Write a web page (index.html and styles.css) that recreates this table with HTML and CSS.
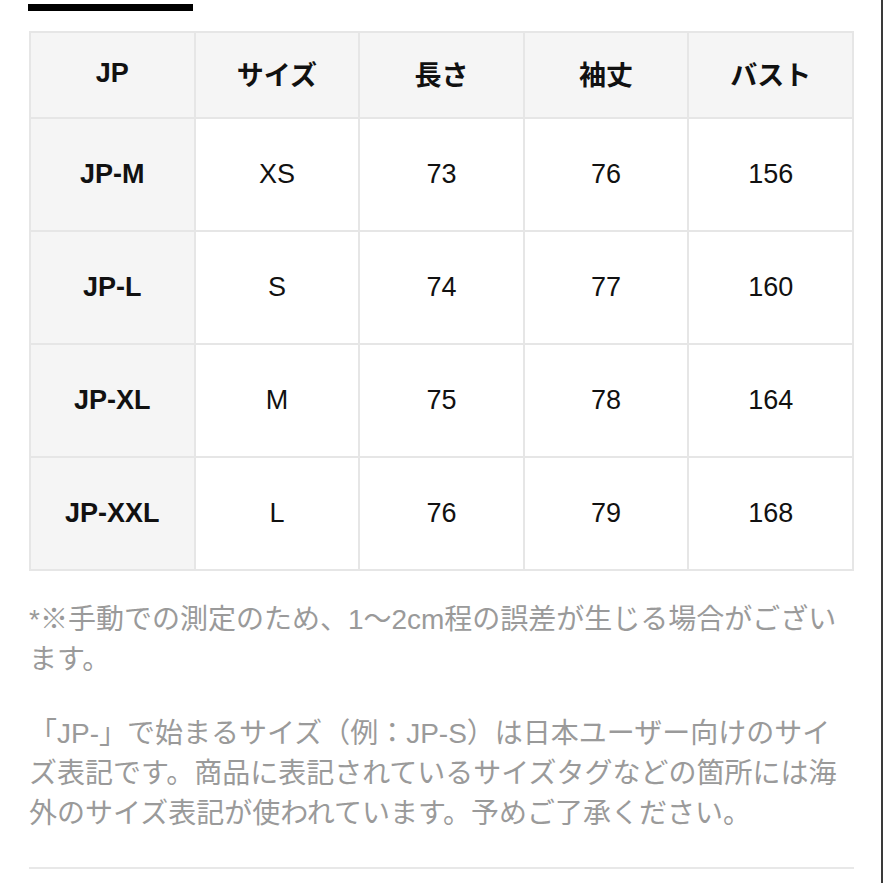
FILE: index.html
```html
<!DOCTYPE html>
<html lang="ja">
<head>
<meta charset="utf-8">
<link rel="stylesheet" href="styles.css">
</head>
<body>
<div class="page">
  <div class="topbar"></div>
  <table class="size-table">
    <thead>
      <tr><th>JP</th><th>サイズ</th><th>長さ</th><th>袖丈</th><th>バスト</th></tr>
    </thead>
    <tbody>
      <tr><th>JP-M</th><td>XS</td><td>73</td><td>76</td><td>156</td></tr>
      <tr><th>JP-L</th><td>S</td><td>74</td><td>77</td><td>160</td></tr>
      <tr><th>JP-XL</th><td>M</td><td>75</td><td>78</td><td>164</td></tr>
      <tr><th>JP-XXL</th><td>L</td><td>76</td><td>79</td><td>168</td></tr>
    </tbody>
  </table>
  <p class="note note-first">*※手動での測定のため、1～2cm程の誤差が生じる場合がござい<br>ます。</p>
  <p class="note">「JP-」で始まるサイズ（例：JP-S）は日本ユーザー向けのサイ<br>ズ表記です。商品に表記されているサイズタグなどの箇所には海<br>外のサイズ表記が使われています。予めご了承ください。</p>
  <div class="divider"></div>
</div>
<div class="scrollline"></div>
</body>
</html>
```
FILE: styles.css
```css
html, body {
  margin: 0;
  padding: 0;
  background: #fff;
  overflow: hidden;
}
body {
  width: 883px;
  height: 883px;
  position: relative;
  font-family: "Liberation Sans", "Noto Sans CJK JP", sans-serif;
}
.page {
  padding: 4px 0 0 29px;
  width: 825px;
}
.topbar {
  width: 165px;
  height: 7px;
  background: #000;
  margin-left: -1px;
  margin-bottom: 20px;
}
.size-table {
  width: 825px;
  border-collapse: collapse;
  table-layout: fixed;
  border: 2px solid #e6e6e6;
}
.size-table th,
.size-table td {
  border: 2px solid #e6e6e6;
  text-align: center;
  vertical-align: middle;
  font-size: 27px;
  color: #111;
  padding: 0;
}
.size-table thead tr {
  height: 86px;
}
.size-table thead th {
  padding-bottom: 4px;
}
.size-table tbody tr {
  height: 113px;
}
.size-table th {
  background: #f5f5f5;
  font-weight: bold;
}
.size-table td {
  background: #fff;
  font-weight: normal;
}
.note {
  margin: 0;
  font-size: 28px;
  line-height: 40px;
  color: #9a9a9a;
  white-space: nowrap;
  margin-top: 34px;
}
.note-first {
  margin-top: 29px;
}
.divider {
  margin-top: 33px;
  height: 2px;
  background: #e8e8e8;
}
.scrollline {
  position: absolute;
  top: 0;
  right: 0;
  width: 2px;
  height: 883px;
  background: #3a3a3a;
}
```
